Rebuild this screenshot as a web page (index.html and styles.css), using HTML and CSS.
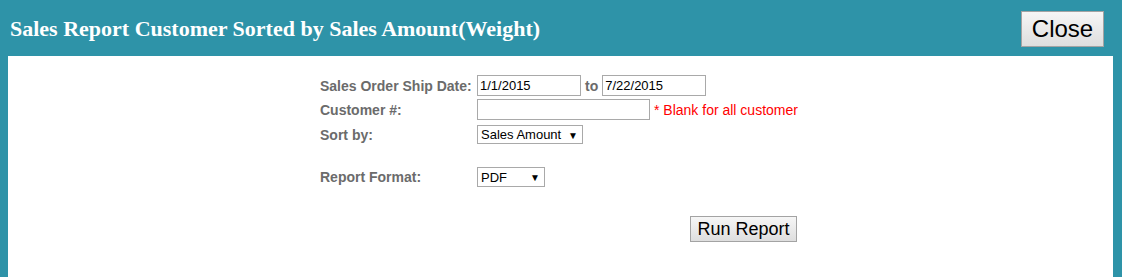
FILE: index.html
```html
<!DOCTYPE html>
<html>
<head>
<meta charset="utf-8">
<link rel="stylesheet" href="styles.css">
</head>
<body>
<div class="header">
  <h1 class="title">Sales Report Customer Sorted by Sales Amount(Weight)</h1>
  <button class="btn btn-close">Close</button>
</div>
<div class="panel">
  <div class="form">
    <div class="row row-date">
      <label class="lbl">Sales Order Ship Date:</label>
      <input class="txt txt-date" type="text" value="1/1/2015">
      <span class="to">to</span>
      <input class="txt txt-date" type="text" value="7/22/2015">
    </div>
    <div class="row row-cust">
      <label class="lbl">Customer #:</label>
      <input class="txt txt-cust" type="text" value="">
      <span class="hint">* Blank for all customer</span>
    </div>
    <div class="row row-sort">
      <label class="lbl">Sort by:</label>
      <span class="sel sel-sort"><select class="sel-box"><option>Sales Amount</option></select><span class="arrow">▼</span></span>
    </div>
    <div class="row row-format">
      <label class="lbl">Report Format:</label>
      <span class="sel sel-fmt"><select class="sel-box"><option>PDF</option></select><span class="arrow">▼</span></span>
    </div>
    <div class="row row-run">
      <button class="btn btn-run">Run Report</button>
    </div>
  </div>
</div>
</body>
</html>
```
FILE: styles.css
```css
html, body {
  margin: 0;
  padding: 0;
  height: 100%;
}
body {
  background: #2e93a8;
  font-family: "Liberation Sans", Arial, sans-serif;
  display: flex;
  flex-direction: column;
}
.header {
  height: 56px;
  display: flex;
  align-items: center;
  justify-content: space-between;
  padding: 0 18px 0 10px;
  box-sizing: border-box;
}
.title {
  margin: 0;
  color: #ffffff;
  font-family: "Liberation Serif", "Times New Roman", serif;
  font-weight: bold;
  font-size: 22px;
  position: relative;
  top: 1px;
}
.btn {
  font-family: "Liberation Sans", Arial, sans-serif;
  color: #000;
  background: linear-gradient(#f6f6f6, #dedede);
  border: 1px solid #a3a3a3;
  border-radius: 0;
  padding: 0;
  box-sizing: border-box;
}
.btn-close {
  width: 83px;
  height: 36px;
  font-size: 24px;
  margin-top: 2px;
}
.panel {
  flex: 1;
  background: #ffffff;
  margin: 0 9px 0 8px;
}
.form {
  padding: 19px 0 0 312px;
}
.row {
  display: flex;
  align-items: center;
}
.lbl {
  width: 157px;
  flex: none;
  font-size: 14px;
  font-weight: bold;
  color: #6b6b6b;
}
.txt {
  font-family: "Liberation Sans", Arial, sans-serif;
  font-size: 13px;
  height: 21px;
  box-sizing: border-box;
  border: 1px solid #a9a9a9;
  padding: 0 2px;
  margin: 0;
  color: #000;
  outline: none;
}
.txt-date { width: 104px; }
.txt-cust { width: 173px; }
.to {
  font-size: 14px;
  font-weight: bold;
  color: #6b6b6b;
  margin: 0 4px 0 4px;
}
.hint {
  color: #ff0000;
  font-size: 14px;
  margin-left: 4px;
}
.row-date { height: 21px; margin-bottom: 3px; }
.row-cust { height: 21px; margin-bottom: 5px; }
.row-sort { height: 19px; margin-bottom: 23px; }
.row-format { height: 20px; margin-bottom: 29px; }
.sel {
  position: relative;
  display: inline-block;
}
.sel-box {
  -webkit-appearance: none;
  appearance: none;
  font-family: "Liberation Sans", Arial, sans-serif;
  font-size: 13px;
  color: #000;
  background: #fff;
  border: 1px solid #a9a9a9;
  border-radius: 0;
  padding: 0 0 0 3px;
  margin: 0;
  box-sizing: border-box;
  display: block;
  outline: none;
}
.sel-sort .sel-box { width: 106px; height: 19px; }
.sel-fmt .sel-box { width: 68px; height: 20px; }
.arrow {
  position: absolute;
  right: 5px;
  top: 50%;
  transform: translateY(-50%);
  font-size: 10px;
  color: #000;
  pointer-events: none;
}
.row-run {
  padding-left: 370px;
}
.btn-run {
  width: 107px;
  height: 26px;
  font-size: 18px;
}
```
